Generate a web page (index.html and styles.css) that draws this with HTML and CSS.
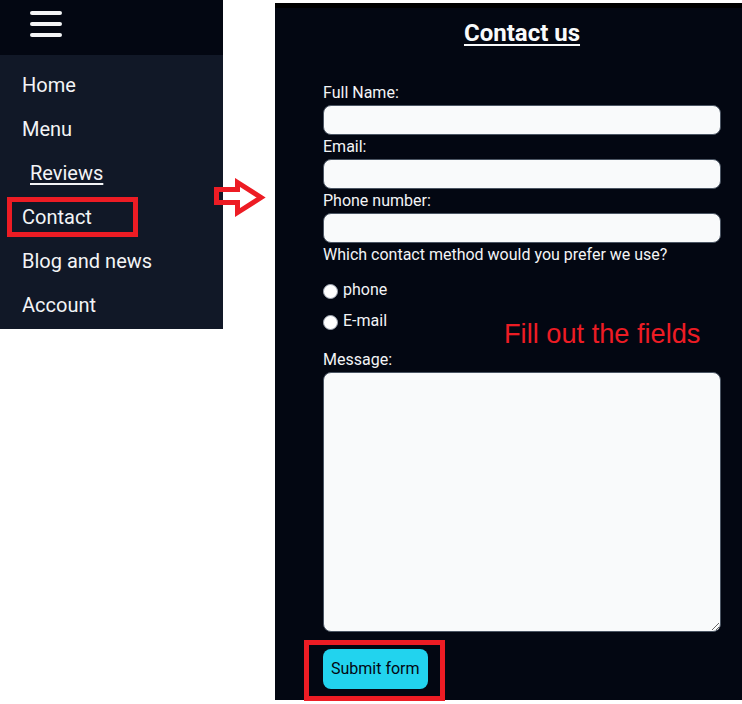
FILE: index.html
```html
<!DOCTYPE html>
<html lang="en">
<head>
<meta charset="utf-8">
<title>Contact us</title>
<link rel="stylesheet" href="styles.css">
</head>
<body>
<div class="page">
  <aside class="sidebar">
    <div class="topbar">
      <svg class="burger" width="32" height="26" viewBox="0 0 32 26" aria-hidden="true">
        <rect x="0" y="0" width="32" height="4" rx="2" fill="#f3f4f6"/>
        <rect x="0" y="11" width="32" height="4" rx="2" fill="#f3f4f6"/>
        <rect x="0" y="22" width="32" height="4" rx="2" fill="#f3f4f6"/>
      </svg>
    </div>
    <nav class="nav">
      <a class="nav-item">Home</a>
      <a class="nav-item">Menu</a>
      <a class="nav-item nav-sub">Reviews</a>
      <a class="nav-item">Contact</a>
      <a class="nav-item">Blog and news</a>
      <a class="nav-item">Account</a>
    </nav>
  </aside>

  <main class="panel">
    <h1 class="title">Contact us</h1>
    <form class="form">
      <label class="field-label">Full Name:</label>
      <input class="text-input" type="text">
      <label class="field-label">Email:</label>
      <input class="text-input" type="text">
      <label class="field-label">Phone number:</label>
      <input class="text-input" type="text">
      <p class="question">Which contact method would you prefer we use?</p>
      <label class="radio-row radio-first"><input class="radio" type="radio" name="m"><span>phone</span></label>
      <label class="radio-row radio-second"><input class="radio" type="radio" name="m"><span>E-mail</span></label>
      <label class="field-label message-label">Message:</label>
      <textarea class="message"></textarea>
      <button class="submit" type="button">Submit form</button>
    </form>
  </main>

  <svg class="arrow" width="56" height="40" viewBox="0 0 56 40" aria-hidden="true">
    <polygon points="4.5,11.5 25.5,11.5 25.5,4.5 49,19.5 25.5,34.5 25.5,24.5 4.5,24.5" fill="none" stroke="#ed1c24" stroke-width="5" stroke-linejoin="miter"/>
  </svg>
  <div class="mark mark-contact"></div>
  <div class="mark mark-submit"></div>
  <div class="note">Fill out the fields</div>
</div>
</body>
</html>
```

FILE: styles.css
```css
html, body {
  margin: 0;
  padding: 0;
  background: #ffffff;
  overflow: hidden;
}

.page {
  position: relative;
  display: flex;
  align-items: flex-start;
  gap: 52px;
  width: 742px;
  height: 704px;
  font-family: Roboto, "Liberation Sans", Arial, sans-serif;
  color: #f3f4f6;
}

.sidebar {
  width: 223px;
  flex: none;
}

.topbar {
  height: 55px;
  background: #030712;
  box-sizing: border-box;
  padding: 11px 0 0 30px;
}

.burger {
  display: block;
}

.nav {
  background: #111827;
  padding: 8px 0 2px;
  display: flex;
  flex-direction: column;
}

.nav-item {
  display: block;
  font-size: 20px;
  line-height: 28px;
  padding: 8px 0 8px 22px;
  color: #f3f4f6;
}

.nav-sub {
  padding-left: 30px;
  text-decoration: underline;
  text-underline-offset: 3px;
}

.panel {
  flex: 1;
  margin-top: 3px;
  background: #030712;
  border-top: 5px solid #000000;
  padding: 0 0 11px 48px;
  box-sizing: border-box;
}

.title {
  width: 398px;
  margin: 11px 0 0;
  font-size: 24px;
  line-height: 28px;
  font-weight: 700;
  text-align: center;
  text-decoration: underline;
  text-underline-offset: 3px;
  color: #f9fafb;
}

.form {
  width: 398px;
  margin-top: 34px;
  display: flex;
  flex-direction: column;
  font-size: 16px;
  line-height: 24px;
}

.field-label {
  display: block;
  height: 24px;
  color: #f3f4f6;
}

.text-input {
  display: block;
  width: 398px;
  height: 30px;
  box-sizing: border-box;
  margin: 0;
  border: 1px solid #4b5563;
  border-radius: 8px;
  background: #f9fafb;
  font: inherit;
}

.question {
  margin: 0;
  height: 24px;
}

.radio-row {
  display: flex;
  align-items: center;
  gap: 5px;
  height: 24px;
}

.radio-first {
  margin-top: 11px;
}

.radio-second {
  margin-top: 7px;
}

.radio {
  appearance: none;
  -webkit-appearance: none;
  width: 15px;
  height: 15px;
  margin: 2px 0 0;
  border-radius: 50%;
  border: 1px solid #9ca3af;
  background: #ffffff;
  box-sizing: border-box;
}

.message-label {
  margin-top: 15px;
}

.message {
  display: block;
  width: 398px;
  height: 260px;
  margin: 0;
  box-sizing: border-box;
  border: 1px solid #4b5563;
  border-radius: 8px;
  background: #f9fafb;
  font: inherit;
}

.submit {
  align-self: flex-start;
  margin-top: 17px;
  height: 40px;
  padding: 0 8px;
  border: none;
  border-radius: 8px;
  background: #22d3ee;
  color: #030712;
  font-family: Roboto, "Liberation Sans", Arial, sans-serif;
  font-size: 16px;
  line-height: 24px;
}

.arrow {
  position: absolute;
  left: 212px;
  top: 178px;
}

.mark {
  position: absolute;
  border: 5px solid #ed1c24;
  box-sizing: border-box;
}

.mark-contact {
  left: 7px;
  top: 197px;
  width: 131px;
  height: 40px;
}

.mark-submit {
  left: 304px;
  top: 640px;
  width: 141px;
  height: 61px;
}

.note {
  position: absolute;
  left: 504px;
  top: 320px;
  font-family: "Liberation Sans", Arial, sans-serif;
  font-size: 27.2px;
  line-height: 28px;
  color: #ed1c24;
  white-space: nowrap;
}
```
